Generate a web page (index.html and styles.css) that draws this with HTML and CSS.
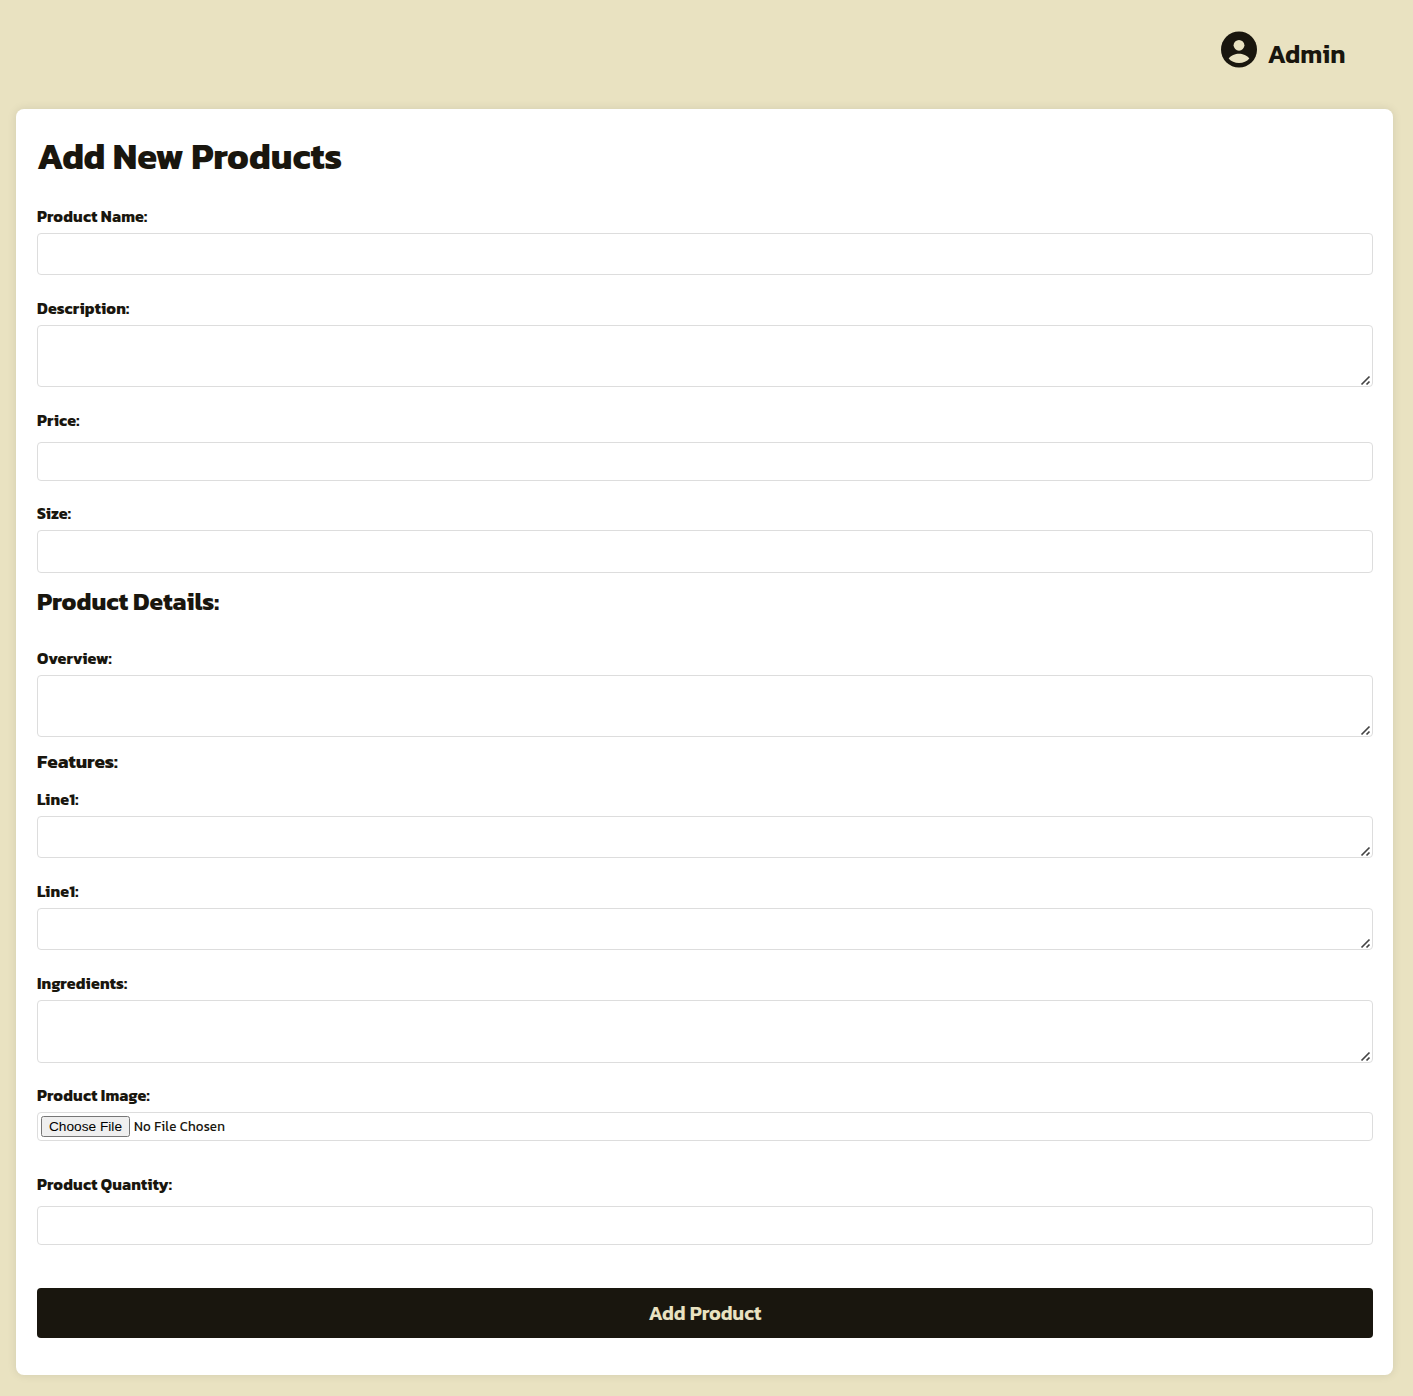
FILE: index.html
```html
<!DOCTYPE html>
<html lang="en">
<head>
<meta charset="utf-8">
<title>Add New Products</title>
<link rel="stylesheet" href="styles.css">
</head>
<body>
<header class="topbar">
  <svg class="avatar" viewBox="0 -0.5 36 37" aria-hidden="true">
    <circle cx="18" cy="18" r="18" fill="#19160e"/>
    <circle cx="18" cy="13.800" r="5.4" fill="#e9e2c1"/>
    <path d="M7.700 27.100C9.500 23.800 14.500 22.200 18 22.200S26.500 23.800 28.300 27.100C26 30 22.200 31.600 18 31.600S10 30 7.700 27.100Z" fill="#e9e2c1"/>
  </svg>
  <span class="user">Admin</span>
</header>
<main class="card">
  <h1 class="title">Add New Products</h1>
  <form class="form">
    <div class="field"><label class="label" for="name">Product Name:</label><input class="control" id="name" type="text"></div>
    <div class="field"><label class="label" for="desc">Description:</label><textarea class="control area" id="desc"></textarea></div>
    <div class="field number"><label class="label" for="price">Price:</label><input class="control" id="price" type="number"></div>
    <div class="field size"><label class="label" for="size">Size:</label><input class="control" id="size" type="text"></div>
    <h2 class="section">Product Details:</h2>
    <div class="field"><label class="label" for="overview">Overview:</label><textarea class="control area" id="overview"></textarea></div>
    <h3 class="subsection">Features:</h3>
    <div class="field"><label class="label" for="line1">Line1:</label><textarea class="control" id="line1"></textarea></div>
    <div class="field"><label class="label" for="line2">Line1:</label><textarea class="control" id="line2"></textarea></div>
    <div class="field"><label class="label" for="ingredients">Ingredients:</label><textarea class="control area tall" id="ingredients"></textarea></div>
    <div class="field image"><label class="label" for="image">Product Image:</label><input class="control file" id="image" type="file"></div>
    <div class="field number quantity"><label class="label" for="quantity">Product Quantity:</label><input class="control" id="quantity" type="number"></div>
    <button class="submit" type="button">Add Product</button>
  </form>
</main>
</body>
</html>
```
FILE: styles.css
```css
* { box-sizing: border-box; }
body {
  margin: 0;
  min-height: 1396px;
  background: #e9e2c1;
  color: #19160e;
  font-family: Kanit, "Noto Sans", sans-serif;
}
.topbar {
  height: 109px;
  padding: 31px 68px 0 0;
  display: flex;
  justify-content: flex-end;
  gap: 10.5px;
}
.avatar { width: 36px; height: 37px; }
.user { width: 77.5px; font-size: 25.6px; font-weight: 600; line-height: 46px; white-space: nowrap; }
.card {
  width: 1377px;
  height: 1266px;
  margin-left: 16px;
  padding: 23px 20px 0 21px;
  background: #fff;
  border-radius: 8px;
  box-shadow: 0 0 10px rgba(0, 0, 0, 0.1);
}
.title { margin: 0 0 24px; font-size: 36px; font-weight: 700; line-height: 48px; white-space: nowrap; }
.form { display: flex; flex-direction: column; }
.field { display: flex; flex-direction: column; gap: 5px; margin-bottom: 21px; }
.label { height: 24px; font-size: 16px; font-weight: 700; line-height: 24px; letter-spacing: 0.17px; white-space: nowrap; }
.control {
  display: block;
  width: 100%;
  height: 42px;
  margin: 0;
  padding: 8px;
  border: 1px solid #ddd;
  border-radius: 4px;
  background: #fff;
  color: #19160e;
  font-family: inherit;
}
.control::-webkit-resizer {
  background: url("data:image/svg+xml,%3Csvg xmlns='http://www.w3.org/2000/svg' width='15' height='15'%3E%3Cpath d='M4.500 13.500L12.500 5.500M9.500 13.500L12.500 10.500' stroke='%23444' stroke-width='1.700'/%3E%3C/svg%3E") no-repeat right bottom;
}
.area { height: 62px; }
.tall { height: 63px; margin-bottom: -1px; }
.number { gap: 10px; margin-bottom: 20px; }
.number .control { height: 39px; }
.size { margin-bottom: 0; }
.size .control { height: 43px; }
.section { height: 73px; margin: 0; padding-top: 11px; font-size: 24.6px; font-weight: 700; line-height: 36px; white-space: nowrap; }
.subsection { height: 29px; margin: 0; font-size: 19px; font-weight: 700; line-height: 8px; white-space: nowrap; }
.image { margin-bottom: 31px; }
.file { height: 29px; padding: 3px; font-size: 13.333px; line-height: 20px; letter-spacing: 0.2px; text-transform: capitalize; }
.file::file-selector-button { height: 21px; width: 89px; padding: 0; font-family: "Liberation Sans", sans-serif; font-size: 13.700px; }
.quantity { margin-bottom: 43px; }
.submit {
  height: 50px;
  border: 0;
  border-radius: 4px;
  background: #19160e;
  color: #e9e2c1;
  font-family: inherit;
  font-size: 19.8px;
  font-weight: 600;
}
```
